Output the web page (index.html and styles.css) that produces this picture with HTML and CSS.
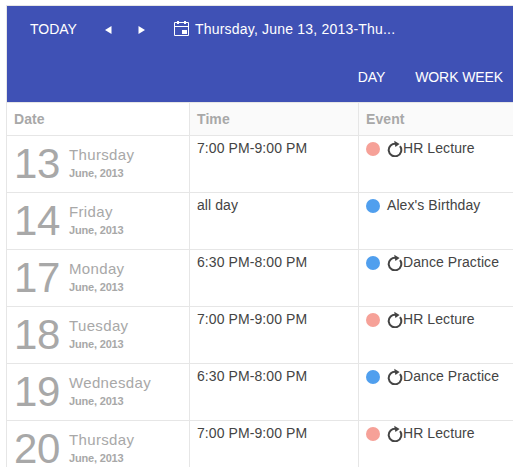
FILE: index.html
```html
<!DOCTYPE html>
<html lang="en">
<head>
<meta charset="utf-8">
<title>Agenda</title>
<link rel="stylesheet" href="styles.css">
</head>
<body>
<svg class="symbols" aria-hidden="true">
  <symbol id="recur" viewBox="0 0 16 19">
    <path d="M9 5.8A6.3 6.3 0 1 0 13 8.2" fill="none" stroke="#444" stroke-width="2"/>
    <path d="M7.2 2.8L12.6 6L8.4 9Z" fill="#444"/>
  </symbol>
</svg>
<main class="scheduler">
  <header class="toolbar">
    <div class="nav">
      <span class="today">TODAY</span>
      <svg class="arrow prev" viewBox="0 0 7 8"><path d="M6.5 0V8L0 4Z" fill="#fff"/></svg>
      <svg class="arrow next" viewBox="0 0 7 8"><path d="M.5 0V8L7 4Z" fill="#fff"/></svg>
      <svg class="calendar" viewBox="0 0 15 15" fill="none" stroke="#fff"><path d="M.5 1.5H14.5V14.5H.5ZM.5 5.5H14.5"/><path d="M3 0H5V3H3ZM10 0H12V3H10ZM8 9H13V13H8Z" fill="#fff" stroke="none"/></svg>
      <span class="range">Thursday, June 13, 2013-Thu...</span>
    </div>
    <div class="views"><span>DAY</span><span class="week">WORK WEEK</span></div>
  </header>
  <section class="agenda">
    <div class="row head"><div class="cell">Date</div><div class="cell">Time</div><div class="cell">Event</div></div>
    <div class="row"><div class="cell date"><b class="num">13</b><div><div class="weekday">Thursday</div><div class="month">June, 2013</div></div></div><div class="cell">7:00 PM-9:00 PM</div><div class="cell event"><i class="dot red"></i><svg class="recur"><use href="#recur"/></svg><span>HR Lecture</span></div></div>
    <div class="row"><div class="cell date"><b class="num">14</b><div><div class="weekday">Friday</div><div class="month">June, 2013</div></div></div><div class="cell">all day</div><div class="cell event"><i class="dot"></i><span>Alex's Birthday</span></div></div>
    <div class="row"><div class="cell date"><b class="num">17</b><div><div class="weekday">Monday</div><div class="month">June, 2013</div></div></div><div class="cell">6:30 PM-8:00 PM</div><div class="cell event"><i class="dot"></i><svg class="recur"><use href="#recur"/></svg><span>Dance Practice</span></div></div>
    <div class="row"><div class="cell date"><b class="num">18</b><div><div class="weekday">Tuesday</div><div class="month">June, 2013</div></div></div><div class="cell">7:00 PM-9:00 PM</div><div class="cell event"><i class="dot red"></i><svg class="recur"><use href="#recur"/></svg><span>HR Lecture</span></div></div>
    <div class="row"><div class="cell date"><b class="num">19</b><div><div class="weekday">Wednesday</div><div class="month">June, 2013</div></div></div><div class="cell">6:30 PM-8:00 PM</div><div class="cell event"><i class="dot"></i><svg class="recur"><use href="#recur"/></svg><span>Dance Practice</span></div></div>
    <div class="row"><div class="cell date"><b class="num">20</b><div><div class="weekday">Thursday</div><div class="month">June, 2013</div></div></div><div class="cell">7:00 PM-9:00 PM</div><div class="cell event"><i class="dot red"></i><svg class="recur"><use href="#recur"/></svg><span>HR Lecture</span></div></div>
  </section>
</main>
</body>
</html>
```
FILE: styles.css
```css
* { box-sizing: border-box; }
body {
  margin: 0;
  height: 467px;
  overflow: hidden;
  background: #fff;
  color: #444;
  font: 14px/20px "Liberation Sans", Arial, sans-serif;
}
.symbols { display: none; }
svg { display: block; flex: none; }
.scheduler {
  margin: 5px 0 0 6px;
  border-top: 1px solid #e6e6e6;
  border-left: 1px solid #e6e6e6;
}
.toolbar {
  height: 96px;
  background: #3f51b5;
  color: #fff;
  white-space: nowrap;
}
.nav {
  display: flex;
  align-items: center;
  height: 48px;
  padding-left: 23px;
}
.nav span { padding-bottom: 2px; }
.today { width: 75px; }
.arrow { width: 7px; height: 8px; }
.next { margin-left: 26px; }
.calendar { width: 15px; height: 15px; margin: 0 6px 3px 29px; }
.range { letter-spacing: 0.2px; }
.views {
  display: flex;
  justify-content: flex-end;
  align-items: center;
  gap: 30px;
  height: 46px;
  padding-right: 10px;
  letter-spacing: -0.1px;
}
.row {
  display: grid;
  grid-template-columns: 182px 169px 1fr;
  height: 57px;
  border-bottom: 1px solid #e6e6e6;
}
.cell {
  padding: 2px 7px 0;
  letter-spacing: 0.08px;
  white-space: nowrap;
}
.cell + .cell { border-left: 1px solid #e6e6e6; }
.head {
  height: 34px;
  border-top: 1px solid #e6e6e6;
  color: #a8a8a8;
  font-weight: bold;
}
.head .cell { padding-top: 6px; }
.head .cell + .cell { background: #fafafa; }
.date { display: flex; color: #a8a8a8; padding-top: 0; }
.num {
  width: 55px;
  font-size: 42px;
  font-weight: normal;
  line-height: 55px;
  letter-spacing: -0.3px;
}
.weekday {
  margin-top: 9px;
  font-size: 15px;
  line-height: 20px;
  letter-spacing: 0.35px;
}
.month {
  font-size: 11px;
  font-weight: bold;
  line-height: 16px;
  letter-spacing: -0.18px;
}
.event { display: flex; }
.dot {
  width: 14px;
  height: 14px;
  margin: 4px 7px 0 0;
  border-radius: 50%;
  background: #509fee;
}
.dot.red { background: #f6a198; }
.recur { width: 16px; height: 19px; }
```
